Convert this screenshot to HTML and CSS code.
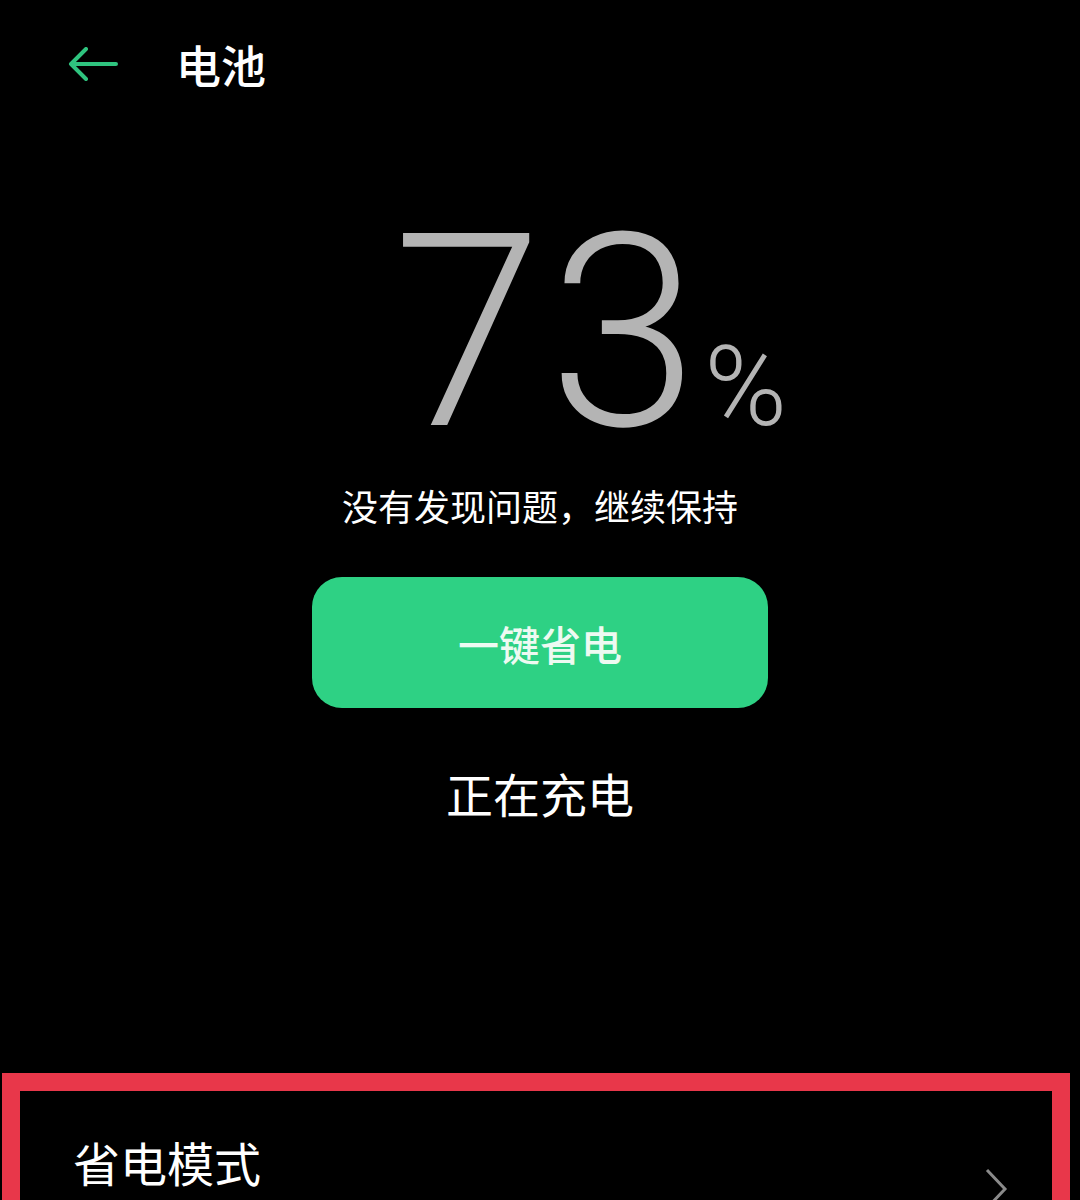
FILE: index.html
```html
<!DOCTYPE html>
<html lang="zh-CN">
<head>
  <meta charset="UTF-8">
  <meta name="viewport" content="width=device-width, initial-scale=1.0">
  <title>电池</title>
  <link rel="stylesheet" href="styles.css">
</head>
<body>
  <div class="header">
    <svg class="back" width="50" height="34" viewBox="0 0 50 34">
      <path d="M48 17H3M18 2L3 17l15 15" fill="none" stroke="#2fc47f" stroke-width="4" stroke-linecap="round" stroke-linejoin="round"/>
    </svg>
    <h1 class="title">电池</h1>
  </div>

  <div class="level">
    <span class="digits">73</span><span class="percent">%</span>
  </div>

  <p class="status">没有发现问题，继续保持</p>

  <div class="action">
    <button class="save-btn">一键省电</button>
  </div>

  <p class="charging">正在充电</p>

  <div class="menu">
    <div class="menu-row">
      <span class="menu-label">省电模式</span>
      <svg class="chevron" width="24" height="44" viewBox="0 0 24 44">
        <polyline points="3,3 21,22 3,41" fill="none" stroke="#8a8a8a" stroke-width="3"/>
      </svg>
    </div>
  </div>
</body>
</html>
```

FILE: styles.css
```css
body {
  margin: 0;
  background: #000;
  color: #fff;
  font-family: "Noto Sans CJK SC", "Noto Sans", sans-serif;
  overflow: hidden;
}

.header {
  height: 128px;
  display: flex;
  align-items: center;
  padding-left: 68px;
  gap: 58px;
}

.title {
  margin: 0;
  font-size: 45px;
  font-weight: 500;
  line-height: 45px;
}

.level {
  margin-top: 70px;
  height: 270px;
  display: flex;
  justify-content: center;
  align-items: baseline;
  padding-left: 100px;
  color: #b4b4b4;
  font-family: Roboto, "Liberation Sans", sans-serif;
  line-height: 270px;
}

.digits {
  font-size: 270px;
  font-weight: 300;
  letter-spacing: 6px;
}

.percent {
  font-size: 112px;
  font-weight: 300;
  line-height: 1;
}

.status {
  margin: 19px 0 0;
  text-align: center;
  font-size: 36px;
  line-height: 36px;
}

.action {
  margin-top: 54px;
  display: flex;
  justify-content: center;
}

.save-btn {
  width: 456px;
  height: 131px;
  border: none;
  border-radius: 30px;
  background: #2ed184;
  color: #eefaf2;
  font-family: "Noto Sans CJK SC", sans-serif;
  font-size: 41px;
  font-weight: 500;
}

.charging {
  margin: 61px 0 0;
  text-align: center;
  font-size: 47px;
  line-height: 47px;
}

.menu {
  margin: 257px 0 0 2px;
  width: 1068px;
  height: 300px;
  border: 18px solid #e8374a;
  padding: 47px 44px 0 53px;
  box-sizing: border-box;
}

.menu-row {
  display: flex;
  justify-content: space-between;
  align-items: flex-start;
}

.menu-label {
  font-size: 47px;
  line-height: 47px;
}

.chevron {
  margin-top: 29px;
}
```
